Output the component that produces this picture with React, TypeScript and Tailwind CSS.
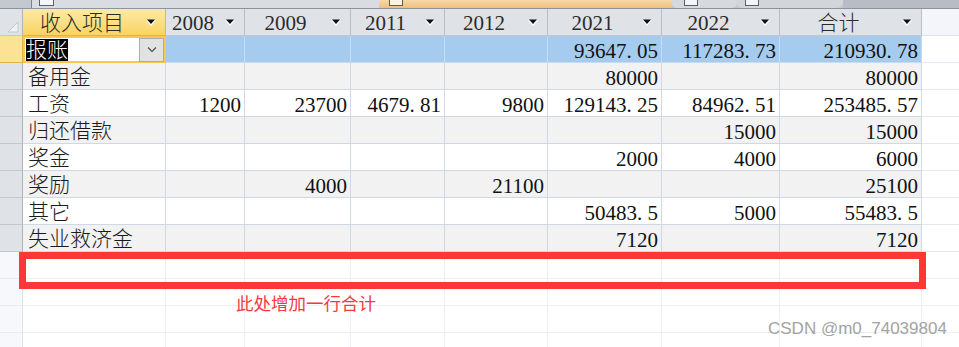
import React from "react";

const FONT = { fontFamily: '"Liberation Serif", "Noto Sans CJK SC", serif' };

const rows: string[][] = [
  ["报账", "", "", "", "", "93647.05", "117283.73", "210930.78"],
  ["备用金", "", "", "", "", "80000", "", "80000"],
  ["工资", "1200", "23700", "4679.81", "9800", "129143.25", "84962.51", "253485.57"],
  ["归还借款", "", "", "", "", "", "15000", "15000"],
  ["奖金", "", "", "", "", "2000", "4000", "6000"],
  ["奖励", "", "4000", "", "21100", "", "", "25100"],
  ["其它", "", "", "", "", "50483.5", "5000", "55483.5"],
  ["失业救济金", "", "", "", "", "7120", "", "7120"],
];

const headers = ["2008", "2009", "2011", "2012", "2021", "2022", "合计"];

function Num({ v }: { v: string }) {
  if (!v) return null;
  const parts = v.split(".");
  return (
    <span className="whitespace-nowrap">
      {parts[0]}
      {parts.length > 1 && (
        <>
          <span className="inline-block w-[0.5em] text-left">.</span>
          {parts[1]}
        </>
      )}
    </span>
  );
}

function Arrow() {
  return (
    <svg width="10" height="7" viewBox="0 0 10 7">
      <polygon points="0,1.5 10,1.5 5,7" fill="#ffffff" />
      <polygon points="1,0.5 9,0.5 5,5" fill="#111111" />
    </svg>
  );
}

function HeaderCell({ label, first }: { label: string; first?: boolean }) {
  return (
    <div
      className={
        first
          ? "flex h-[27px] items-center border-r border-b border-r-[#e3b94a] border-b-[#d9b54d] bg-gradient-to-b from-[#fdeaa6] to-[#f9d460]"
          : "flex h-[27px] items-center border-r border-b border-r-[#b9bec6] border-b-[#c3c8cf] bg-[#dfe3e8]"
      }
    >
      <span className="flex-1 text-center text-[21px] font-light leading-[26px] text-[#2a2a2a] pt-[1px]">{label}</span>
      <div className="flex w-[24px] items-center pl-[5px] pt-[1px]">
        <Arrow />
      </div>
    </div>
  );
}

function TabStrip() {
  return (
    <div className="flex h-[9px] border-b border-[#8e949c] bg-[#c4c8cf]">
      <div className="w-[31px]" />
      <div className="flex w-[348px] border-l border-[#7d838b] bg-[#d9dce1]">
        <div className="ml-[7px] h-[6px] w-[15px] border-x border-b border-[#5a5f66] bg-[#f4f5f7]" />
      </div>
      <div className="flex w-[293px] rounded-br-[4px] bg-gradient-to-b from-[#f6d8a8] to-[#f0c07c]">
        <div className="ml-[10px] h-[6px] w-[14px] border-x border-b border-[#6a5a44] bg-[#fbf3e4]" />
      </div>
      <div className="flex w-[65px] rounded-bl-[5px] rounded-br-[5px] bg-[#d6d9de]">
        <div className="ml-[12px] h-[6px] w-[14px] border-x border-b border-[#5a5f66] bg-[#f4f5f7]" />
      </div>
      <div className="flex w-[106px] rounded-bl-[5px] rounded-br-[6px] bg-[#d2d5da]">
        <div className="ml-[8px] h-[6px] w-[14px] border-x border-b border-[#5a5f66] bg-[#f4f5f7]" />
      </div>
      <div className="flex-1 bg-[#b8bdc5]" />
    </div>
  );
}

export default function App() {
  return (
    <div className="relative h-[347px] w-[959px] overflow-hidden bg-white" style={FONT}>
      <TabStrip />
      <div className="grid grid-cols-[23px_143px_79px_106px_94px_103px_114px_118px_142px_1fr]">
        {/* header */}
        <div className="relative h-[27px] border-r border-b border-r-[#adb3bb] border-b-[#c3c8cf] bg-[#dfe3e8]">
          <svg className="absolute left-[7px] top-[12px]" width="12" height="12" viewBox="0 0 12 12">
            <polygon points="11,1 11,11 1,11" fill="#eef0f3" stroke="#c4c9d0" strokeWidth="1" />
          </svg>
        </div>
        <HeaderCell label="收入项目" first />
        {headers.map((h) => (
          <HeaderCell key={h} label={h} />
        ))}
        <div className="h-[27px] border-b border-[#dde2ea] bg-[#f3f5fa]" />

        {/* data rows */}
        {rows.map((r, i) => {
          const sel = i === 0;
          const alt = i % 2 === 1;
          const rowBg = sel ? "bg-[#a5ccef]" : alt ? "bg-[#f2f2f2]" : "bg-white";
          return (
            <React.Fragment key={i}>
              <div
                className={
                  sel
                    ? "h-[27px] border-r border-b border-r-[#d9b54d] border-b-[#d9b54d] bg-[#fce294]"
                    : "h-[27px] border-r border-b border-r-[#adb3bb] border-b-[#c2c8d0] bg-[#dfe3e8]"
                }
              />
              {sel ? (
                <div className="flex h-[27px] items-center justify-between border-2 border-[#f4c94e] bg-white pl-[1px] pr-0">
                  <span className="bg-black text-[21px] font-light leading-[22px] text-white">{r[0]}</span>
                  <div className="flex h-[24px] w-[25px] items-center justify-center border border-[#adadad] bg-[#e2e2e2]">
                    <svg width="10" height="6" viewBox="0 0 10 6">
                      <polyline points="1,0.5 5,4.5 9,0.5" fill="none" stroke="#4a4a4a" strokeWidth="1.1" />
                    </svg>
                  </div>
                </div>
              ) : (
                <div className={`flex h-[27px] items-center border-r border-b border-[#d0d7e5] pl-[5px] ${rowBg}`}>
                  <span className="whitespace-nowrap text-[21px] font-light leading-[26px] text-[#1a1a1a] pt-[2px]">{r[0]}</span>
                </div>
              )}
              {r.slice(1).map((v, j) => (
                <div
                  key={j}
                  className={
                    sel
                      ? "flex h-[27px] items-center justify-end border-r border-b border-r-[#c7dcf2] border-b-[#c7dcf2] bg-[#a5ccef] pr-[3px]"
                      : `flex h-[27px] items-center justify-end border-r border-b border-[#d0d7e5] pr-[3px] ${rowBg}`
                  }
                >
                  <span className="text-[21px] leading-[26px] text-[#111] pt-[3px]">
                    <Num v={v} />
                  </span>
                </div>
              ))}
              <div className="h-[27px] border-b border-[#e6e9ef] bg-white" />
            </React.Fragment>
          );
        })}

        {/* empty rows */}
        {[0, 1, 2, 3].map((k) => (
          <React.Fragment key={`e${k}`}>
            <div className="h-[27px] border-r border-b border-r-[#dde1e8] border-b-[#e9ecf2] bg-[#f7f8fb]" />
            {[0, 1, 2, 3, 4, 5, 6, 7].map((c) => (
              <div key={c} className="h-[27px] border-r border-b border-[#eceff4] bg-white" />
            ))}
            <div className="h-[27px] border-b border-[#eceff4] bg-white" />
          </React.Fragment>
        ))}
      </div>

      {/* annotation overlay */}
      <div className="absolute left-[19px] top-[252px] h-[37px] w-[907px] border-[7px] border-[#fd3636]" />
      <div
        className="absolute left-[236px] top-[294px] whitespace-nowrap text-[17.5px] leading-none text-[#f23a3b]"
        style={{ fontFamily: '"Noto Sans CJK SC", sans-serif' }}
      >
        此处增加一行合计
      </div>
      <div
        className="absolute left-[768px] top-[320px] whitespace-nowrap text-[17px] leading-none text-[#a3a3a3]"
        style={{ fontFamily: '"Liberation Sans", "Noto Sans", sans-serif' }}
      >
        CSDN @m0_74039804
      </div>
    </div>
  );
}
